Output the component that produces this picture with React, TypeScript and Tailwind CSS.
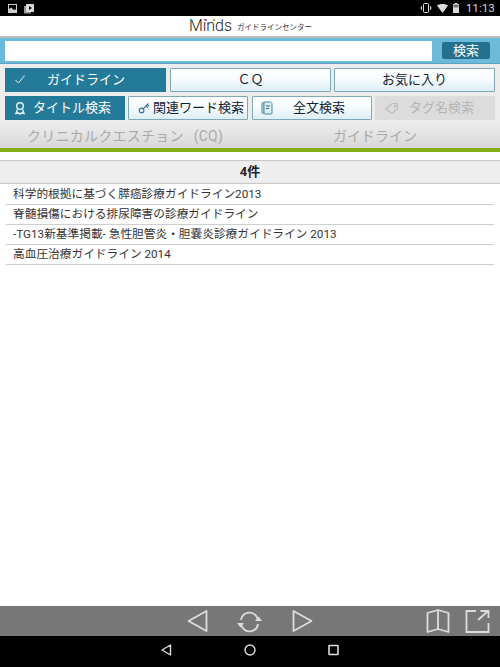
import React from "react";

const font = { fontFamily: '"Roboto","Noto Sans CJK JP",sans-serif' };

function Ribbon({ c = "#dfecf1" }: { c?: string }) {
  return (
    <svg width="12" height="14" viewBox="0 0 12 14" fill="none" stroke={c} strokeWidth="1.500">
      <circle cx="6" cy="5" r="3.300" />
      <path d="M3.500 8.500 2 12.500l2.400-.6L6 13l1.600-1.100 2.400.6-1.500-4" />
    </svg>
  );
}

function Key() {
  return (
    <svg width="12" height="12" viewBox="0 0 12 12" fill="none" stroke="#2b6f8c" strokeWidth="1.100">
      <circle cx="3.600" cy="8.400" r="2.300" />
      <path d="M5.400 6.600 10.500 1.500M8 4l1.600 1.600M9.400 2.600 11 4.200" />
    </svg>
  );
}

function Doc() {
  return (
    <svg width="12" height="14" viewBox="0 0 12 14" fill="none">
      <rect x="0.800" y="1.500" width="8" height="11" rx="1" fill="#9fc3d2" stroke="#7fa9bb" />
      <path d="M3 1h6.500L11 2.500V12a1 1 0 0 1-1 1H4a1 1 0 0 1-1-1z" fill="#dcecf3" stroke="#4f8aa3" />
      <path d="M5 5h4M5 7.500h3" stroke="#2b6f8c" />
    </svg>
  );
}

function Tag() {
  return (
    <svg width="14" height="12" viewBox="0 0 14 12" fill="none" stroke="#bcbcbc" strokeWidth="1.100">
      <path d="M1 7 7 1.500h5.500V6.500L7 11.500z" />
      <circle cx="10.300" cy="3.800" r="0.800" />
    </svg>
  );
}

function Btn({
  children,
  className,
}: {
  children: React.ReactNode;
  className: string;
}) {
  return (
    <div
      className={
        "flex h-[24px] items-center rounded-[1px] border border-[#7fa9bb] bg-gradient-to-b from-white via-[#f5fbfd] to-[#dceef5] text-[13px] text-[#123] " +
        className
      }
    >
      {children}
    </div>
  );
}

const rows = [
  "科学的根拠に基づく膵癌診療ガイドライン2013",
  "脊髄損傷における排尿障害の診療ガイドライン",
  "-TG13新基準掲載- 急性胆管炎・胆嚢炎診療ガイドライン 2013",
  "高血圧治療ガイドライン 2014",
];

export default function App() {
  return (
    <div className="flex h-[667px] w-[500px] flex-col overflow-hidden bg-white" style={font}>
      {/* status bar */}
      <div className="flex h-[16px] items-center justify-between bg-black pl-[8px] pr-[5px] text-white">
        <div className="flex items-center gap-[7px]">
          <svg width="9" height="9" viewBox="0 0 9 9">
            <rect x="0.500" y="0.500" width="8" height="8" fill="none" stroke="#ccc" />
            <path d="M1 8V5l2-1.500L6 6l1-.7L8 6v2z" fill="#ccc" />
          </svg>
          <svg width="10" height="11" viewBox="0 0 10 11">
            <rect x="0" y="3" width="7" height="7.500" fill="#999" />
            <rect x="2" y="1" width="8" height="8" rx="1" fill="#ddd" />
            <path d="M5 3l3 2-3 2z" fill="#000" />
          </svg>
        </div>
        <div className="flex items-center gap-[5px]">
          <svg width="12" height="10" viewBox="0 0 12 10">
            <rect x="3.500" y="0.500" width="5" height="9" rx="1" fill="none" stroke="#ddd" />
            <path d="M1.500 3v4M10.500 3v4" stroke="#bbb" />
            <path d="M0 4v2M12 4v2" stroke="#888" />
          </svg>
          <svg width="11" height="9" viewBox="0 0 11 9">
            <path d="M0 1.500C3-.5 8-.5 11 1.500L5.500 9z" fill="#ddd" />
          </svg>
          <svg width="6" height="10" viewBox="0 0 6 10">
            <rect x="0" y="1" width="6" height="9" fill="#ddd" />
            <rect x="1.500" y="0" width="3" height="1" fill="#ddd" />
            <rect x="0.500" y="1.500" width="5" height="3" fill="#777" />
          </svg>
          <span className="ml-[2px] text-[11px] leading-none tracking-[0.3px] text-[#ddd]">11:13</span>
        </div>
      </div>

      {/* header */}
      <div className="flex h-[22px] items-center justify-center border-b-2 border-[#bdbdbd] bg-white pl-[1px]">
        <span className="relative text-[16px] font-light leading-none text-[#222]">
          Minds
          <span className="absolute left-[1px] top-[1px] h-[2px] w-[2px] bg-[#1f9fa8]" />
          <span className="absolute left-[16px] top-[1px] h-[2px] w-[2px] bg-[#c45aa8]" />
          <span className="absolute left-[24px] top-[1px] h-[2px] w-[2px] bg-[#8ec31f]" />
        </span>
        <span className="ml-[5px] mt-[3px] text-[7.500px] leading-none text-[#333]">ガイドラインセンター</span>
      </div>

      {/* search */}
      <div className="flex h-[26px] items-center border-b border-[#5ba3c0] bg-[#6cbad9] pl-[5px] pr-[10px]">
        <div className="h-[20px] w-[427px] bg-white" />
        <div className="ml-[10px] flex h-[17px] w-[48px] items-center justify-center rounded-[2px] bg-[#23708f] text-[13px] leading-none text-white">
          検索
        </div>
      </div>

      {/* filters */}
      <div className="flex h-[60px] flex-col gap-[4px] bg-[#ececec] px-[5px] pt-[4px]">
        <div className="flex">
          <div className="relative flex h-[24px] w-[161px] items-center bg-[#247a99] text-[13px] text-white">
            <svg className="absolute left-[10px] top-[7px]" width="10" height="9" viewBox="0 0 10 9" fill="none" stroke="#e8f1f5" strokeWidth="1">
              <path d="M0.500 5 3.500 8 9.500 0.500" />
            </svg>
            <span className="ml-[42px]">ガイドライン</span>
          </div>
          <Btn className="ml-[4px] w-[161px] justify-center">ＣＱ</Btn>
          <Btn className="ml-[3px] w-[161px] justify-center">お気に入り</Btn>
        </div>
        <div className="flex">
          <div className="flex h-[24px] w-[120px] items-center bg-[#247a99] pl-[9px] text-[13px] text-white">
            <Ribbon />
            <span className="ml-[7px]">タイトル検索</span>
          </div>
          <Btn className="ml-[3px] w-[120px] pl-[9px]">
            <Key />
            <span className="ml-[3px] whitespace-nowrap">関連ワード検索</span>
          </Btn>
          <Btn className="ml-[4px] w-[120px] pl-[8px]">
            <Doc />
            <span className="ml-[20px]">全文検索</span>
          </Btn>
          <div className="ml-[3px] flex h-[24px] w-[120px] items-center bg-[#dcdcdc] pl-[10px] text-[13px] text-[#b5b5b5]">
            <Tag />
            <span className="ml-[10px]">タグ名検索</span>
          </div>
        </div>
      </div>

      {/* tabs */}
      <div className="flex h-[28px] border-b-[4px] border-[#85ae16] bg-gradient-to-b from-[#ececec] to-[#d8d8d8] text-[14px] text-[#aaaaaa]">
        <div className="flex w-1/2 items-center justify-center tracking-[0.25px]">
          クリニカルクエスチョン<span className="ml-[10px]">(CQ)</span>
        </div>
        <div className="flex w-1/2 items-center justify-center">ガイドライン</div>
      </div>

      {/* results */}
      <div className="mt-[8px] flex h-[24px] items-center justify-center border-y border-[#c8c8c8] bg-[#eeeeee] text-[13px] font-bold text-[#222]">
        4件
      </div>
      <div className="mt-[1px] flex-1">
        {rows.map((r) => (
          <div
            key={r}
            className="mx-[6px] flex h-[20px] items-center border-b border-[#cfcfcf] pl-[7px] text-[11.700px] text-[#333]"
          >
            {r}
          </div>
        ))}
      </div>

      {/* toolbar */}
      <div className="relative flex h-[30px] items-center bg-[#777777]">
        <svg className="absolute left-[186px] top-[3px]" width="24" height="24" viewBox="0 0 24 24" fill="none" stroke="#ddd" strokeWidth="1.800" strokeLinejoin="round">
          <path d="M20.500 2v20L2.500 12z" />
        </svg>
        <svg className="absolute left-[236px] top-[4px]" width="27" height="24" viewBox="0 0 27 24" fill="none" stroke="#ddd" strokeWidth="1.800">
          <path d="M5 10a8.500 8.500 0 0 1 15.500-3.500L22 9" />
          <path d="M22 14a8.500 8.500 0 0 1-15.500 3.500L5 15" />
          <path d="M19 11h7l-3.500-4.500z" fill="#ddd" stroke="none" />
          <path d="M1 13h7l-3.500 4.500z" fill="#ddd" stroke="none" />
        </svg>
        <svg className="absolute left-[290px] top-[3px]" width="24" height="24" viewBox="0 0 24 24" fill="none" stroke="#ddd" strokeWidth="1.800" strokeLinejoin="round">
          <path d="M3.500 2v20l18-10z" />
        </svg>
        <svg className="absolute left-[425px] top-[3px]" width="26" height="25" viewBox="0 0 26 25" fill="none" stroke="#ddd" strokeWidth="1.800" strokeLinejoin="round">
          <path d="M13 1 2.500 4v19L13 20l10.500 3V4z" />
          <path d="M13 1v19" />
        </svg>
        <svg className="absolute left-[465px] top-[2px]" width="25" height="26" viewBox="0 0 25 26" fill="none" stroke="#ddd" strokeWidth="1.800">
          <path d="M11 3H1.500v21h22V15" />
          <path d="M13 12 23 3M15.500 3h8v7" />
        </svg>
      </div>

      {/* nav */}
      <div className="relative h-[31px] bg-black">
        <svg className="absolute left-[160px] top-[7px]" width="12" height="14" viewBox="0 0 12 14" fill="none" stroke="#ddd" strokeWidth="1.400" strokeLinejoin="round">
          <path d="M10.500 2v10L2 7z" />
        </svg>
        <svg className="absolute left-[244px] top-[8px]" width="12" height="12" viewBox="0 0 12 12" fill="none" stroke="#ddd" strokeWidth="1.400">
          <circle cx="6" cy="6" r="5" />
        </svg>
        <svg className="absolute left-[328px] top-[8px]" width="11" height="12" viewBox="0 0 11 12" fill="none" stroke="#ddd" strokeWidth="1.600">
          <rect x="1" y="1.500" width="9" height="9" rx="0.500" />
        </svg>
      </div>
    </div>
  );
}
